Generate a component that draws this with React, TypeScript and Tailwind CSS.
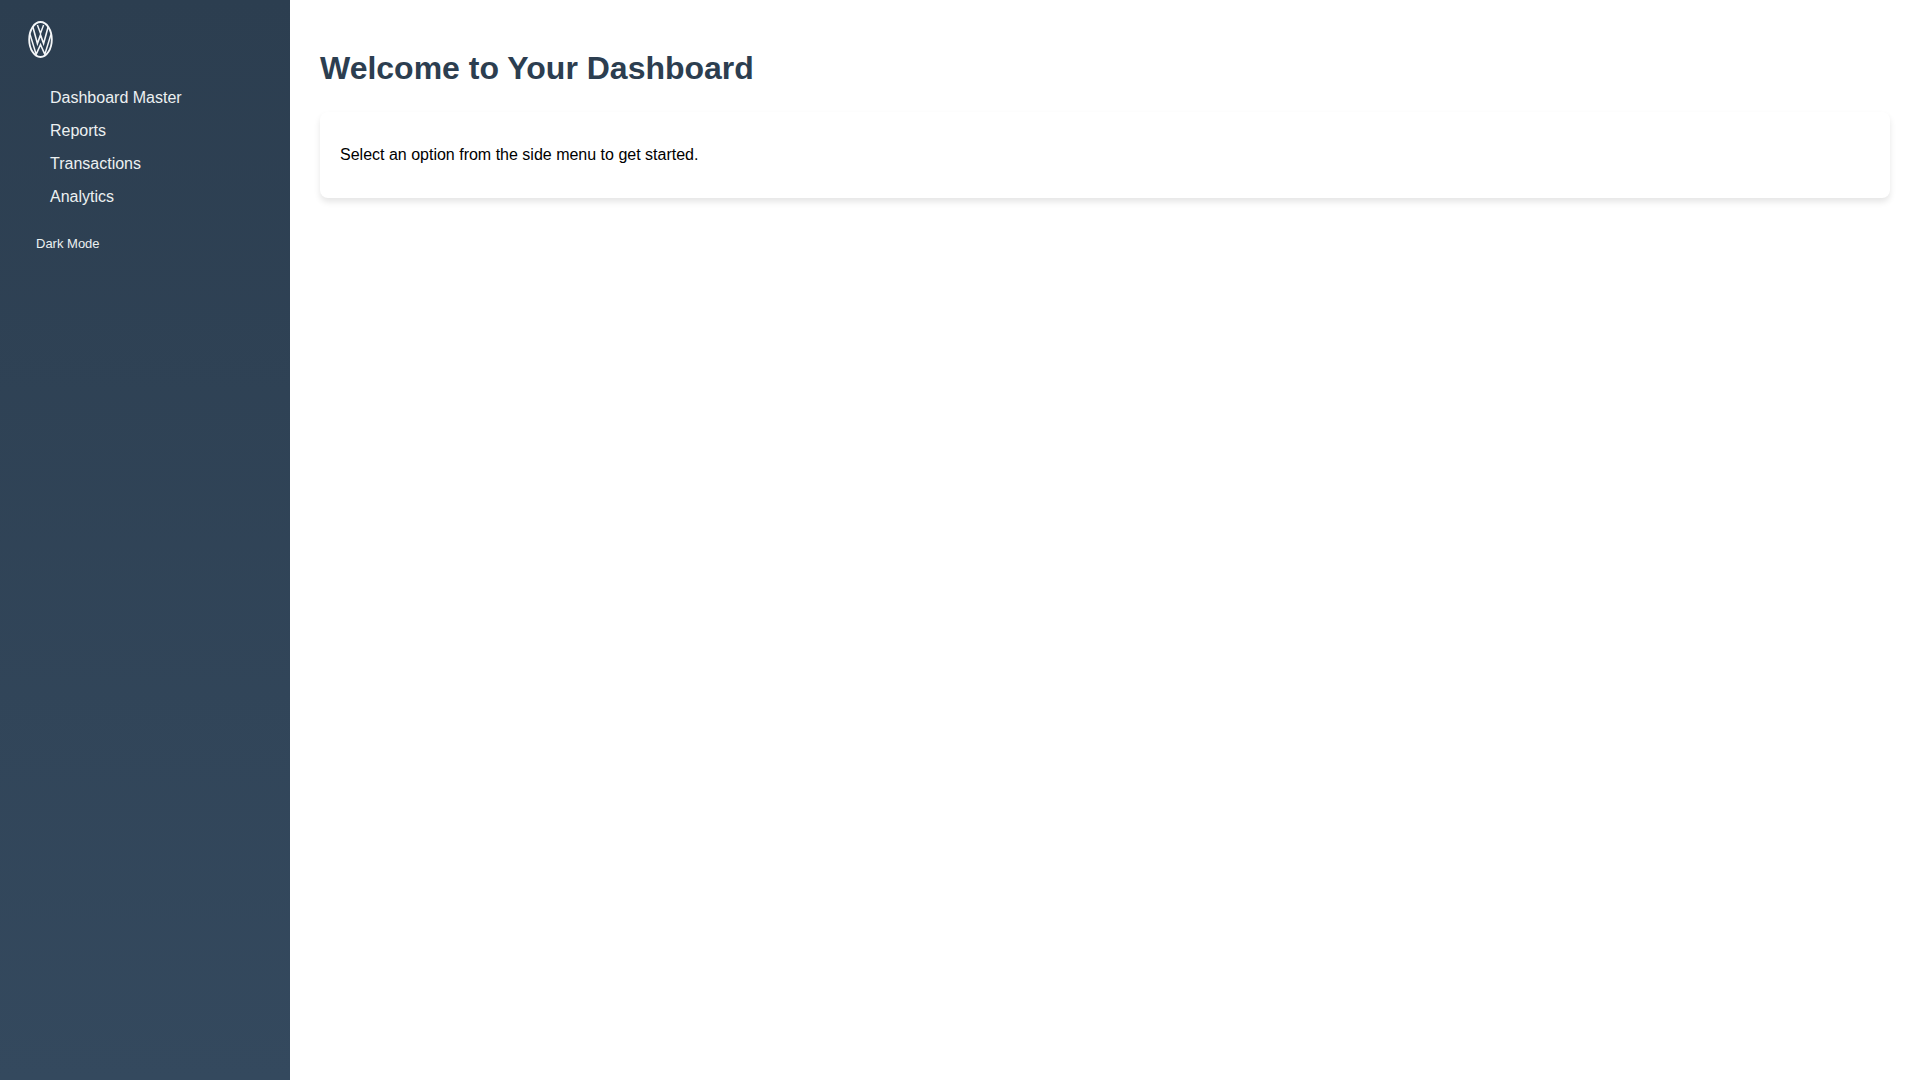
const menuItems = ['Dashboard Master', 'Reports', 'Transactions', 'Analytics']

function Logo() {
  return (
    <svg viewBox="0 0 24 36" className="h-[37px] w-[25px]" fill="none" stroke="#f4f6f8">
      <ellipse cx="12" cy="18" rx="11" ry="17" strokeWidth="1.8" />
      <path d="M4.5 5.5 L9 22 L12 13.5 L15 22 L19.5 5.5" strokeWidth="1.6" strokeLinejoin="miter" />
      <path d="M9 4 L12 12 L15 4" strokeWidth="1.4" />
      <path d="M1.8 13 L7.8 32.5 L12 23 L16.2 32.5 L22.2 13" strokeWidth="1.5" />
    </svg>
  )
}

export default function App() {
  return (
    <div className="flex min-h-screen bg-white font-['Liberation_Sans',Arial,sans-serif]">
      <aside className="flex w-[290px] shrink-0 flex-col bg-gradient-to-b from-[#2c3e50] to-[#34495e] pt-5">
        <div className="flex h-[38px] items-center pl-[28px]">
          <Logo />
        </div>
        <ul className="mt-[23px] flex flex-col pl-[50px]">
          {menuItems.map((item) => (
            <li key={item} className="h-[33px] text-base leading-[33px] text-[#ecf0f1]">
              {item}
            </li>
          ))}
        </ul>
        <div className="mt-[23px] pl-9 text-[13px] leading-[15px] text-[#ecf0f1]">Dark Mode</div>
      </aside>
      <main className="min-w-0 flex-1 px-[30px] pt-[50px]">
        <h1 className="text-[32px] leading-[37px] font-bold text-[#2c3e50]">Welcome to Your Dashboard</h1>
        <div className="mt-[25px] rounded-lg bg-white px-5 py-[30px] shadow-[0_4px_6px_rgba(0,0,0,0.1)]">
          <p className="text-base leading-[26px] text-black">Select an option from the side menu to get started.</p>
        </div>
      </main>
    </div>
  )
}
